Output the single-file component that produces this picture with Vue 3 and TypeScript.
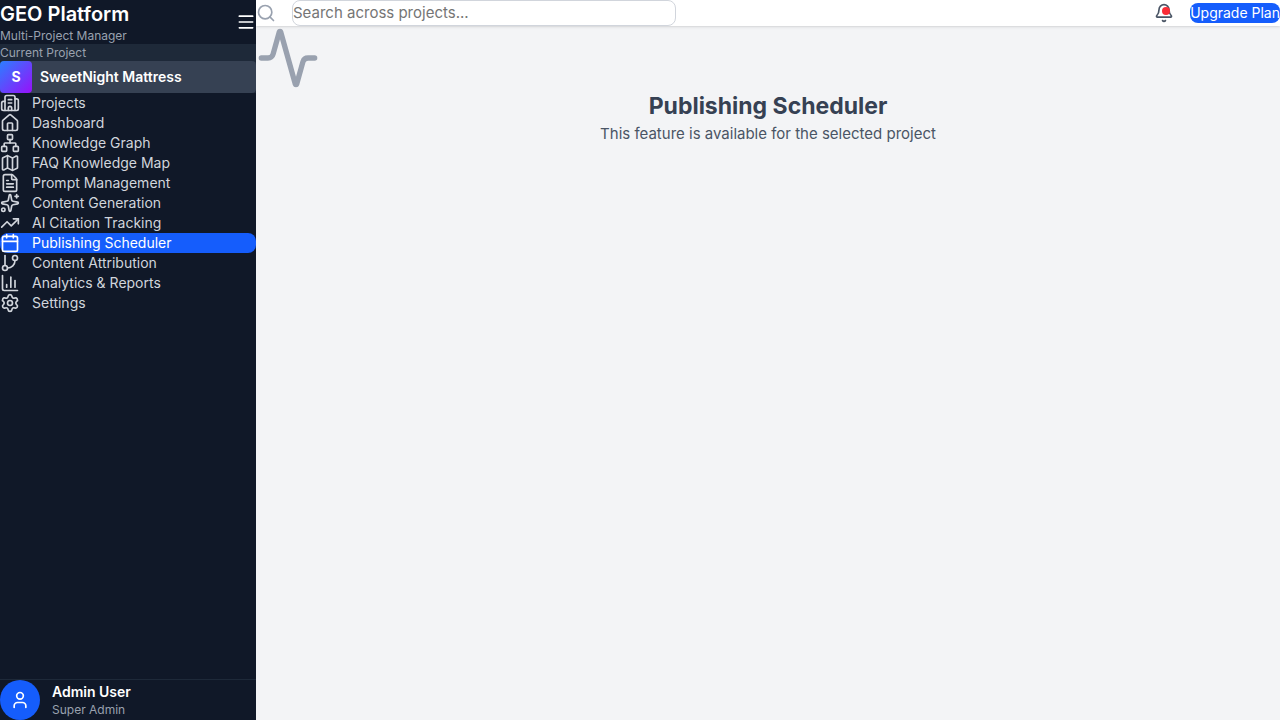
<script setup lang="ts">
import { ref } from 'vue'

interface NavItem {
  label: string
  paths: string[]
}

const items: NavItem[] = [
  {
    label: 'Projects',
    paths: [
      'M10 12h4',
      'M10 8h4',
      'M14 21v-3a2 2 0 0 0-4 0v3',
      'M6 10H4a2 2 0 0 0-2 2v7a2 2 0 0 0 2 2h16a2 2 0 0 0 2-2V9a2 2 0 0 0-2-2h-2',
      'M6 21V5a2 2 0 0 1 2-2h8a2 2 0 0 1 2 2v16',
    ],
  },
  {
    label: 'Dashboard',
    paths: [
      'M15 21v-8a1 1 0 0 0-1-1h-4a1 1 0 0 0-1 1v8',
      'M3 10a2 2 0 0 1 .709-1.528l7-6a2 2 0 0 1 2.582 0l7 6A2 2 0 0 1 21 10v9a2 2 0 0 1-2 2H5a2 2 0 0 1-2-2z',
    ],
  },
  {
    label: 'Knowledge Graph',
    paths: [
      'M17 16h4a1 1 0 0 1 1 1v4a1 1 0 0 1-1 1h-4a1 1 0 0 1-1-1v-4a1 1 0 0 1 1-1z',
      'M3 16h4a1 1 0 0 1 1 1v4a1 1 0 0 1-1 1H3a1 1 0 0 1-1-1v-4a1 1 0 0 1 1-1z',
      'M10 2h4a1 1 0 0 1 1 1v4a1 1 0 0 1-1 1h-4a1 1 0 0 1-1-1V3a1 1 0 0 1 1-1z',
      'M5 16v-3a1 1 0 0 1 1-1h12a1 1 0 0 1 1 1v3',
      'M12 12V8',
    ],
  },
  {
    label: 'FAQ Knowledge Map',
    paths: [
      'M14.106 5.553a2 2 0 0 0 1.788 0l3.659-1.83A1 1 0 0 1 21 4.619v12.764a1 1 0 0 1-.553.894l-4.553 2.277a2 2 0 0 1-1.788 0l-4.212-2.106a2 2 0 0 0-1.788 0l-3.659 1.83A1 1 0 0 1 3 19.381V6.618a1 1 0 0 1 .553-.894l4.553-2.277a2 2 0 0 1 1.788 0z',
      'M15 5.764v15',
      'M9 3.236v15',
    ],
  },
  {
    label: 'Prompt Management',
    paths: [
      'M6 22a2 2 0 0 1-2-2V4a2 2 0 0 1 2-2h8a2.4 2.4 0 0 1 1.704.706l3.588 3.588A2.4 2.4 0 0 1 20 8v12a2 2 0 0 1-2 2z',
      'M14 2v5a1 1 0 0 0 1 1h5',
      'M10 9H8',
      'M16 13H8',
      'M16 17H8',
    ],
  },
  {
    label: 'Content Generation',
    paths: [
      'M11.017 2.814a1 1 0 0 1 1.966 0l1.051 5.558a2 2 0 0 0 1.594 1.594l5.558 1.051a1 1 0 0 1 0 1.966l-5.558 1.051a2 2 0 0 0-1.594 1.594l-1.051 5.558a1 1 0 0 1-1.966 0l-1.051-5.558a2 2 0 0 0-1.594-1.594l-5.558-1.051a1 1 0 0 1 0-1.966l5.558-1.051a2 2 0 0 0 1.594-1.594z',
      'M20 2v4',
      'M22 4h-4',
      'M6 20a2 2 0 1 1-4 0 2 2 0 0 1 4 0z',
    ],
  },
  { label: 'AI Citation Tracking', paths: ['M16 7h6v6', 'm22 7-8.5 8.5-5-5L2 17'] },
  {
    label: 'Publishing Scheduler',
    paths: [
      'M8 2v4',
      'M16 2v4',
      'M5 4h14a2 2 0 0 1 2 2v14a2 2 0 0 1-2 2H5a2 2 0 0 1-2-2V6a2 2 0 0 1 2-2z',
      'M3 10h18',
    ],
  },
  {
    label: 'Content Attribution',
    paths: [
      'M6 3v12',
      'M21 6a3 3 0 1 1-6 0 3 3 0 0 1 6 0z',
      'M9 18a3 3 0 1 1-6 0 3 3 0 0 1 6 0z',
      'M18 9a9 9 0 0 1-9 9',
    ],
  },
  {
    label: 'Analytics & Reports',
    paths: ['M3 3v16a2 2 0 0 0 2 2h16', 'M18 17V9', 'M13 17V5', 'M8 17v-3'],
  },
  {
    label: 'Settings',
    paths: [
      'M9.671 4.136a2.34 2.34 0 0 1 4.659 0 2.34 2.34 0 0 0 3.319 1.915 2.34 2.34 0 0 1 2.33 4.033 2.34 2.34 0 0 0 0 3.831 2.34 2.34 0 0 1-2.33 4.033 2.34 2.34 0 0 0-3.319 1.915 2.34 2.34 0 0 1-4.659 0 2.34 2.34 0 0 0-3.32-1.915 2.34 2.34 0 0 1-2.33-4.033 2.34 2.34 0 0 0 0-3.831A2.34 2.34 0 0 1 6.35 6.051a2.34 2.34 0 0 0 3.319-1.915',
      'M15 12a3 3 0 1 1-6 0 3 3 0 0 1 6 0z',
    ],
  },
]

const active = ref('Publishing Scheduler')
const query = ref('')
</script>

<template>
  <div class="layout">
    <aside class="sidebar">
      <div class="brand">
        <div>
          <h1>GEO Platform</h1>
          <p class="muted">Multi-Project Manager</p>
        </div>
        <button type="button" class="icon-button" aria-label="Toggle sidebar">
          <svg class="icon" viewBox="0 0 24 24"><path d="M4 5h16M4 12h16M4 19h16" /></svg>
        </button>
      </div>

      <div class="current">
        <p class="muted">Current Project</p>
        <div class="project">
          <span class="project-logo">S</span>
          <span class="project-name">SweetNight Mattress</span>
        </div>
      </div>

      <nav>
        <button
          v-for="item in items"
          :key="item.label"
          type="button"
          class="nav-item"
          :class="{ active: item.label === active }"
          @click="active = item.label"
        >
          <svg class="icon" viewBox="0 0 24 24" aria-hidden="true">
            <path v-for="d in item.paths" :key="d" :d="d" />
          </svg>
          <span>{{ item.label }}</span>
        </button>
      </nav>

      <div class="user">
        <div class="avatar">
          <svg class="icon" viewBox="0 0 24 24" aria-hidden="true">
            <path d="M19 21v-2a4 4 0 0 0-4-4H9a4 4 0 0 0-4 4v2" />
            <circle cx="12" cy="7" r="4" />
          </svg>
        </div>
        <div>
          <p class="user-name">Admin User</p>
          <p class="muted">Super Admin</p>
        </div>
      </div>
    </aside>

    <div class="content">
      <header class="topbar">
        <div class="search">
          <svg class="icon" viewBox="0 0 24 24" aria-hidden="true">
            <path d="m21 21-4.34-4.34" />
            <circle cx="11" cy="11" r="8" />
          </svg>
          <input v-model="query" type="text" aria-label="Search" placeholder="Search across projects..." />
        </div>
        <div class="actions">
          <button type="button" class="icon-button bell" aria-label="Notifications">
            <svg class="icon" viewBox="0 0 24 24">
              <path d="M10.268 21a2 2 0 0 0 3.464 0" />
              <path d="M3.262 15.326A1 1 0 0 0 4 17h16a1 1 0 0 0 .74-1.673C19.41 13.956 18 12.499 18 8A6 6 0 0 0 6 8c0 4.499-1.411 5.956-2.738 7.326" />
            </svg>
            <span class="dot"></span>
          </button>
          <button type="button" class="upgrade">Upgrade Plan</button>
        </div>
      </header>

      <main>
        <svg class="icon hero" viewBox="0 0 24 24" aria-hidden="true">
          <path d="M22 12h-2.48a2 2 0 0 0-1.93 1.46l-2.35 8.36a.25.25 0 0 1-.48 0L9.24 2.18a.25.25 0 0 0-.48 0l-2.35 8.36A2 2 0 0 1 4.49 12H2" />
        </svg>
        <h2>{{ active }}</h2>
        <p>This feature is available for the selected project</p>
      </main>
    </div>
  </div>
</template>

<style>
body {
  margin: 0;
}
</style>

<style scoped>
.layout {
  display: flex;
  height: 100vh;
  background: #f3f4f6;
  font-family: Inter, "Liberation Sans", sans-serif;
  font-size: 15px;
  line-height: 24px;
}

.layout * {
  box-sizing: border-box;
}

h1,
h2,
p {
  margin: 0;
}

button {
  border: 0;
  padding: 0;
  background: transparent;
  color: inherit;
  font: inherit;
  cursor: pointer;
}

.icon {
  display: block;
  flex-shrink: 0;
  width: 20px;
  height: 20px;
  fill: none;
  stroke: currentColor;
  stroke-width: 2;
  stroke-linecap: round;
  stroke-linejoin: round;
}

.icon-button {
  display: block;
}

.sidebar {
  display: flex;
  flex-direction: column;
  flex-shrink: 0;
  width: 256px;
  background: #101828;
  color: #fff;
}

.brand {
  display: flex;
  align-items: center;
  justify-content: space-between;
  border-bottom: 1px solid #1e2939;
}

h1 {
  font-size: 20px;
  line-height: 28px;
  font-weight: 600;
}

.muted {
  color: #99a1af;
  font-size: 12px;
  line-height: 16px;
}

.current {
  background: #1e2939;
}

.project {
  display: flex;
  align-items: center;
  gap: 8px;
  border-radius: 4px;
  background: #364153;
  font-size: 14px;
  line-height: 20px;
  font-weight: 600;
}

.project-logo {
  display: flex;
  align-items: center;
  justify-content: center;
  width: 32px;
  height: 32px;
  border-radius: 4px;
  background: linear-gradient(to bottom right, #2b7fff, #9810fa);
  font-weight: 700;
}

nav {
  display: flex;
  flex: 1;
  flex-direction: column;
  overflow-y: auto;
}

.nav-item {
  display: flex;
  align-items: center;
  gap: 12px;
  border-radius: 8px;
  color: #d1d5dc;
  font-size: 14px;
  line-height: 20px;
  text-align: left;
}

.nav-item.active {
  background: #155dfc;
  color: #fff;
}

.user {
  display: flex;
  align-items: center;
  gap: 12px;
  border-top: 1px solid #1e2939;
}

.avatar {
  display: flex;
  align-items: center;
  justify-content: center;
  width: 40px;
  height: 40px;
  border-radius: 50%;
  background: #155dfc;
}

.user-name {
  font-size: 14px;
  line-height: 20px;
  font-weight: 600;
}

.content {
  display: flex;
  flex: 1;
  flex-direction: column;
  min-width: 0;
}

.topbar {
  display: flex;
  align-items: center;
  justify-content: space-between;
  background: #fff;
  box-shadow: 0 1px 3px rgba(0, 0, 0, 0.1), 0 1px 2px -1px rgba(0, 0, 0, 0.1);
}

.search {
  display: flex;
  align-items: center;
  gap: 16px;
  color: #99a1af;
}

input {
  width: 384px;
  padding: 0;
  border: 1px solid #d1d5dc;
  border-radius: 8px;
  background: transparent;
  color: #101828;
  font: inherit;
}

input::placeholder {
  color: #757575;
}

.actions {
  display: flex;
  align-items: center;
  gap: 16px;
  color: #4a5565;
}

.bell {
  position: relative;
}

.dot {
  position: absolute;
  top: 4px;
  right: 4px;
  width: 8px;
  height: 8px;
  border-radius: 50%;
  background: #fb2c36;
}

.upgrade {
  border-radius: 8px;
  background: #155dfc;
  color: #fff;
  font-size: 14px;
  line-height: 20px;
}

main {
  flex: 1;
  overflow: auto;
  color: #4a5565;
  text-align: center;
}

.hero {
  width: 64px;
  height: 64px;
  color: #99a1af;
}

h2 {
  color: #364153;
  font-size: 23px;
  line-height: 32px;
  font-weight: 700;
}
</style>
